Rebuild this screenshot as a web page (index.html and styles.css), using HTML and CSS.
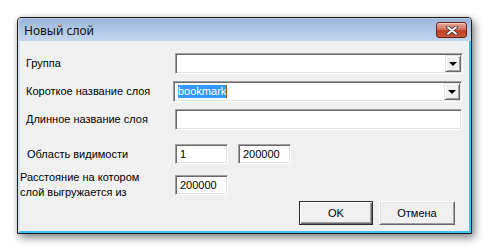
FILE: index.html
```html
<!DOCTYPE html>
<html lang="ru">
<head>
<meta charset="utf-8">
<title>Новый слой</title>
<link rel="stylesheet" href="styles.css">
</head>
<body>
<div class="dialog">
  <div class="titlebar">
    <span class="title">Новый слой</span>
    <button class="close" type="button" aria-label="Закрыть">
      <svg width="12" height="9" viewBox="0 0 12 9">
        <path d="M2 1.2 L10 7.8 M10 1.2 L2 7.8" stroke="#3a3a3a" stroke-width="3.6" stroke-linecap="round" fill="none"/>
        <path d="M2 1.2 L10 7.8 M10 1.2 L2 7.8" stroke="#ffffff" stroke-width="1.8" stroke-linecap="round" fill="none"/>
      </svg>
    </button>
  </div>
  <div class="client">
    <div class="row r1">
      <span class="label w155">Группа</span>
      <div class="field combo w288"><span class="value"></span><span class="drop"><span class="tri"></span></span></div>
    </div>
    <div class="row r2">
      <span class="label w153">Короткое название слоя</span>
      <div class="field combo w289"><span class="value"><span class="sel">bookmark</span></span><span class="drop"><span class="tri"></span></span></div>
    </div>
    <div class="row r3">
      <span class="label w155">Длинное название слоя</span>
      <div class="field w287"><span class="value"></span></div>
    </div>
    <div class="row r4">
      <span class="label w155 lab4">Область видимости</span>
      <div class="field small"><span class="value">1</span></div>
      <div class="field small gapl"><span class="value">200000</span></div>
    </div>
    <div class="row r5">
      <span class="label w155 lab5">Расстояние на котором<br>слой выгружается из</span>
      <div class="field small"><span class="value">200000</span></div>
    </div>
    <div class="buttons">
      <button class="btn default" type="button">OK</button>
      <button class="btn cancel" type="button">Отмена</button>
    </div>
  </div>
</div>
</body>
</html>
```

FILE: styles.css
```css
html, body {
  margin: 0;
  padding: 0;
  background: #ffffff;
}
body {
  font-family: "Liberation Sans", Arial, sans-serif;
  font-size: 11px;
  color: #000;
  padding: 17px 0 0 17px;
  height: 251px;
  box-sizing: border-box;
  overflow: hidden;
}
.dialog {
  width: 453px;
  border: 1px solid #1c1c1c;
  border-radius: 4px 4px 0 0;
  background: #c6d9ee;
  box-shadow: 3px 4px 9px rgba(0, 0, 0, 0.45), 0 0 5px rgba(0, 0, 0, 0.15);
}
.titlebar {
  height: 23px;
  display: flex;
  align-items: flex-start;
  justify-content: space-between;
  padding: 0 4px 0 6px;
  background: linear-gradient(#97b4d8, #b3cbe7 60%, #c2d6ec);
  border-radius: 3px 3px 0 0;
  box-shadow: inset 1px 1px 0 rgba(255,255,255,0.35);
}
.title {
  font-family: "Noto Sans", "Open Sans", sans-serif;
  font-size: 12px;
  line-height: 16px;
  margin-top: 5px;
  color: #111;
}
.close {
  margin-top: 4px;
  width: 31px;
  height: 16px;
  padding: 0;
  border: 1px solid #6e2114;
  border-radius: 3px;
  background: linear-gradient(#e9a898, #d27560 45%, #bf4128 55%, #c8563c);
  box-shadow: inset 0 1px 0 rgba(255,255,255,0.45);
  display: flex;
  align-items: center;
  justify-content: center;
}
.close svg { display: block; }
.client {
  height: 190px;
  box-sizing: border-box;
  background: #f0f0f0;
  border-left: 2px solid #d2e2f3;
  border-right: 2px solid #3ac3ef;
  border-bottom: 2px solid #3ac3ef;
  padding-top: 12px;
  height: 192px;
}
.row {
  display: flex;
  align-items: center;
}
.r2, .r3 { margin-top: 7px; }
.r4 { margin-top: 14px; }
.r5 { margin-top: 6px; }
.label {
  box-sizing: border-box;
  padding-left: 6px;
  white-space: nowrap;
  line-height: 15px;
}
.w155 { width: 155px; }
.w153 { width: 153px; }
.lab4 { padding-left: 7px; }
.lab5 { padding-left: 0; }
.field {
  box-sizing: border-box;
  height: 21px;
  background: #fff;
  border-top: 1px solid #a0a0a0;
  border-left: 1px solid #a0a0a0;
  border-bottom: 1px solid #ffffff;
  border-right: 1px solid #ffffff;
  box-shadow: inset 1px 1px 0 #696969, inset -1px -1px 0 #e3e3e3;
  display: flex;
  align-items: center;
  position: relative;
}
.w288 { width: 288px; }
.w289 { width: 289px; }
.w287 { width: 287px; }
.small { width: 53px; height: 20px; }
.gapl { margin-left: 10px; }
.value {
  flex: 1;
  padding-left: 4px;
  line-height: 13px;
  white-space: nowrap;
}
.sel {
  background: #3399ff;
  color: #fff;
  border-right: 1px solid #b05a10;
  display: inline-block;
  line-height: 13px;
}
.drop {
  width: 16px;
  height: 17px;
  margin-right: 1px;
  box-sizing: border-box;
  background: #f0f0f0;
  border-top: 1px solid #e3e3e3;
  border-left: 1px solid #e3e3e3;
  border-right: 1px solid #696969;
  border-bottom: 1px solid #696969;
  box-shadow: inset 1px 1px 0 #fff, inset -1px -1px 0 #a0a0a0;
  display: flex;
  align-items: center;
  justify-content: center;
}
.tri {
  width: 0;
  height: 0;
  border-left: 4px solid transparent;
  border-right: 4px solid transparent;
  border-top: 4px solid #000;
  margin-top: 1px;
}
.buttons {
  display: flex;
  justify-content: flex-end;
  gap: 6px;
  padding-right: 14px;
  margin-top: 1px;
}
.btn {
  box-sizing: border-box;
  height: 24px;
  padding: 0;
  font-family: "Liberation Sans", Arial, sans-serif;
  font-size: 11px;
  color: #000;
  background: #f0f0f0;
  border-top: 1px solid #fff;
  border-left: 1px solid #fff;
  border-right: 1px solid #696969;
  border-bottom: 1px solid #696969;
  box-shadow: inset 1px 1px 0 #e3e3e3, inset -1px -1px 0 #a0a0a0;
}
.default {
  width: 74px;
  border: 1px solid #2b2b2b;
  box-shadow: inset 1px 1px 0 #fff, inset -1px -1px 0 #696969, inset -2px -2px 0 #a0a0a0;
}
.cancel { width: 76px; }
```
